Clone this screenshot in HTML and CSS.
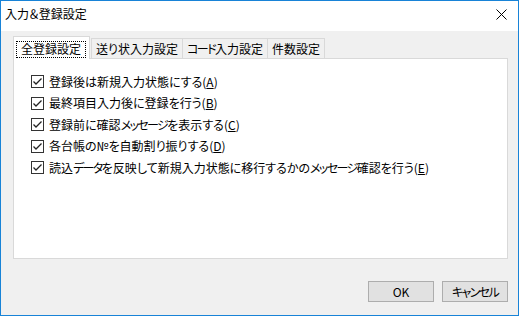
FILE: index.html
```html
<!DOCTYPE html>
<html lang="ja">
<head>
<meta charset="utf-8">
<link rel="stylesheet" href="styles.css">
</head>
<body>
<div class="window">
  <div class="titlebar">
    <span class="title">入力＆登録設定</span>
    <svg class="close" width="11" height="11" viewBox="0 0 11 11"><path d="M0.5 0.5 L10.5 10.5 M10.5 0.5 L0.5 10.5" stroke="#000" stroke-width="1" fill="none"/></svg>
  </div>
  <div class="content">
    <div class="tabs">
      <div class="tab active"><span class="focus">全登録設定</span></div>
      <div class="tab">送り状入力設定</div>
      <div class="tab"><span class="kk">コード</span>入力設定</div>
      <div class="tab">件数設定</div>
    </div>
    <div class="panel">
      <label class="row"><span class="cb"><svg width="13" height="13" viewBox="0 0 13 13"><rect x="0.5" y="0.5" width="12" height="12" fill="#fff" stroke="#333"/><path d="M2.5 6.5 L5 9 L10.5 3.5" stroke="#222" stroke-width="1.3" fill="none"/></svg></span>登録後は新規入力状態にする(<u>A</u>)</label>
      <label class="row"><span class="cb"><svg width="13" height="13" viewBox="0 0 13 13"><rect x="0.5" y="0.5" width="12" height="12" fill="#fff" stroke="#333"/><path d="M2.5 6.5 L5 9 L10.5 3.5" stroke="#222" stroke-width="1.3" fill="none"/></svg></span>最終項目入力後に登録を行う(<u>B</u>)</label>
      <label class="row"><span class="cb"><svg width="13" height="13" viewBox="0 0 13 13"><rect x="0.5" y="0.5" width="12" height="12" fill="#fff" stroke="#333"/><path d="M2.5 6.5 L5 9 L10.5 3.5" stroke="#222" stroke-width="1.3" fill="none"/></svg></span>登録前に確認<span class="kk">メッセージ</span>を表示する(<u>C</u>)</label>
      <label class="row"><span class="cb"><svg width="13" height="13" viewBox="0 0 13 13"><rect x="0.5" y="0.5" width="12" height="12" fill="#fff" stroke="#333"/><path d="M2.5 6.5 L5 9 L10.5 3.5" stroke="#222" stroke-width="1.3" fill="none"/></svg></span>各台帳の№を自動割り振りする(<u>D</u>)</label>
      <label class="row"><span class="cb"><svg width="13" height="13" viewBox="0 0 13 13"><rect x="0.5" y="0.5" width="12" height="12" fill="#fff" stroke="#333"/><path d="M2.5 6.5 L5 9 L10.5 3.5" stroke="#222" stroke-width="1.3" fill="none"/></svg></span>読込<span class="kk">データ</span>を反映して新規入力状態に移行するかの<span class="kk">メッセージ</span>確認を行う(<u>E</u>)</label>
    </div>
    <div class="buttons">
      <button class="btn">OK</button>
      <button class="btn"><span class="kk">キャンセル</span></button>
    </div>
  </div>
</div>
</body>
</html>
```
FILE: styles.css
```css
html, body {
  margin: 0;
  padding: 0;
  background: #f0f0f0;
}
.window {
  width: 519px;
  height: 316px;
  box-sizing: border-box;
  border: 1px solid #1883d7;
  background: #f0f0f0;
  display: flex;
  flex-direction: column;
  font-family: "Noto Sans CJK JP", "Noto Sans", sans-serif;
  font-size: 12px;
  font-feature-settings: "palt";
  color: #000;
  overflow: hidden;
}
.kk {
  letter-spacing: -1.6px;
}
.titlebar {
  height: 30px;
  background: #fff;
  display: flex;
  align-items: center;
  justify-content: space-between;
  padding: 0 11px 0 4px;
  flex: none;
}
.title {
  line-height: 16px;
  margin-top: -4px;
}
.close {
  margin-top: -4px;
}
.content {
  flex: 1;
  display: flex;
  flex-direction: column;
  padding: 5px 10px 0 12px;
}
.tabs {
  display: flex;
  align-items: flex-end;
  height: 22px;
  padding-left: 2px;
  position: relative;
  z-index: 1;
}
.tab {
  height: 20px;
  box-sizing: border-box;
  padding: 0 4px;
  border: 1px solid #d9d9d9;
  border-bottom: none;
  margin-right: -1px;
  background: #f0f0f0;
  line-height: 19px;
  white-space: nowrap;
}
.tab.active {
  height: 23px;
  margin: 0 0 -1px -2px;
  padding: 2px 3px 0 2px;
  background: #fff;
  border-color: #d9d9d9;
  margin-right: 1px;
}
.focus {
  display: inline-block;
  border: 1px dotted #000;
  line-height: 14px;
  padding: 0 4px 1px 4px;
  margin-top: 1px;
}
.panel {
  height: 201px;
  box-sizing: border-box;
  background: #fff;
  border: 1px solid #d9d9d9;
  padding: 12px 0 0 17px;
  display: flex;
  flex-direction: column;
  gap: 0.5px;
}
.row {
  display: flex;
  align-items: center;
  height: 21px;
  line-height: 16px;
  white-space: nowrap;
}
.cb {
  width: 13px;
  height: 13px;
  margin-right: 5px;
  display: flex;
}
.row u {
  text-decoration: underline;
  text-underline-offset: 1px;
}
.buttons {
  display: flex;
  justify-content: flex-end;
  gap: 8px;
  margin-top: 22px;
}
.btn {
  width: 66px;
  height: 21px;
  box-sizing: border-box;
  border: 1px solid #adadad;
  background: #e1e1e1;
  font-family: inherit;
  font-size: 12px;
  font-feature-settings: "palt";
  line-height: 16px;
  padding: 0;
  color: #000;
}
```
